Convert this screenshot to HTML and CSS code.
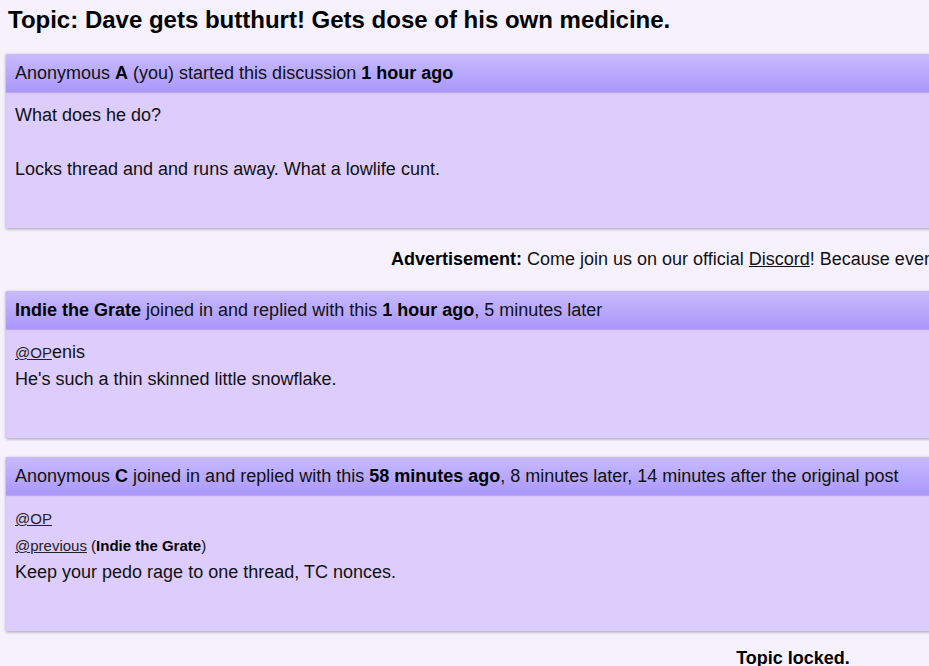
FILE: index.html
```html
<!DOCTYPE html>
<html lang="en">
<head>
<meta charset="utf-8">
<title>Topic: Dave gets butthurt! Gets dose of his own medicine.</title>
<link rel="stylesheet" href="styles.css">
</head>
<body>
<h1 class="topic-title">Topic: Dave gets butthurt! Gets dose of his own medicine.</h1>
<div class="thread">
  <article class="post">
    <header class="post-head">Anonymous <strong>A</strong> (you) started this discussion <strong>1 hour ago</strong></header>
    <div class="post-body">What does he do?<br><br>Locks thread and and runs away. What a lowlife cunt.</div>
  </article>

  <p class="ad"><strong>Advertisement:</strong> Come join us on our official <a href="#" class="plain-link">Discord</a>! Because everyone else has one, and we like it.</p>

  <article class="post">
    <header class="post-head"><strong>Indie the Grate</strong> joined in and replied with this <strong>1 hour ago</strong>, 5 minutes later</header>
    <div class="post-body"><a href="#" class="cite-link">@OP</a>enis<br>He's such a thin skinned little snowflake.</div>
  </article>

  <article class="post">
    <header class="post-head">Anonymous <strong>C</strong> joined in and replied with this <strong>58 minutes ago</strong>, 8 minutes later, 14 minutes after the original post</header>
    <div class="post-body">
      <div class="cite-line"><a href="#" class="cite-link">@OP</a></div>
      <div class="cite-line"><a href="#" class="cite-link">@previous</a> (<strong>Indie the Grate</strong>)</div>
      Keep your pedo rage to one thread, TC nonces.
    </div>
  </article>

  <p class="locked">Topic locked.</p>
</div>
</body>
</html>
```

FILE: styles.css
```css
html, body {
  overflow: hidden;
}
body {
  margin: 0;
  background: #f5f2fe;
  color: #111;
  font-family: "Liberation Sans", Arial, sans-serif;
  font-size: 18px;
  line-height: 27px;
}
.topic-title {
  margin: 6px 8px 20px;
  font-size: 24px;
  line-height: 28px;
  font-weight: bold;
  color: #000;
}
.thread {
  margin-left: 6px;
  width: 1574px;
  display: flex;
  flex-direction: column;
}
.post {
  background: #ddcdfd;
  box-shadow: 0 1px 3px rgba(0, 0, 0, 0.35);
  margin-bottom: 19px;
}
.post-head {
  background: linear-gradient(to bottom, #c7bbfd, #aa98fb);
  padding: 5px 9px;
  line-height: 28px;
  box-shadow: 0 1px 1px rgba(90, 60, 170, 0.25);
}
.post-head strong {
  color: #000;
}
.post-body {
  padding: 10px 9px 45px;
}
.cite-line {
  font-size: 15px;
}
.cite-line strong {
  color: #000;
}
.cite-link {
  font-size: 15px;
  line-height: 1;
  color: #222;
  text-decoration: underline;
}
.plain-link {
  color: #111;
  text-decoration: underline;
}
.ad {
  margin: -1px 0 18px;
  text-align: center;
}
.ad strong {
  color: #000;
}
.locked {
  margin: -5px 0 0;
  text-align: center;
  font-weight: bold;
  color: #000;
}
```
